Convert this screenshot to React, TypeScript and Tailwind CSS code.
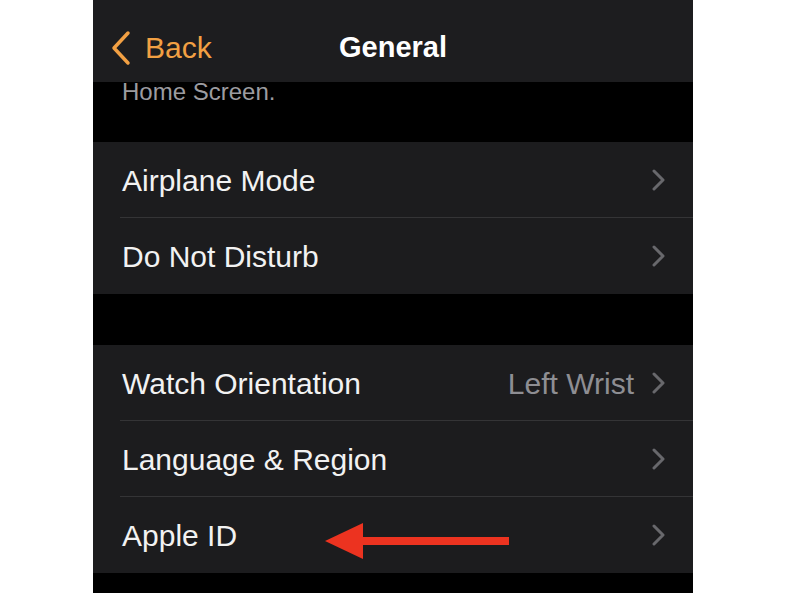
import React from 'react'

const font = { fontFamily: '"Liberation Sans", Arial, sans-serif' }

function Chevron() {
  return (
    <svg width="13" height="22" viewBox="0 0 13 22" fill="none">
      <path d="M2 2 L11 11 L2 20" stroke="#68686c" strokeWidth="3" strokeLinecap="round" strokeLinejoin="round" />
    </svg>
  )
}

function Row({ label, value, last, children }: { label: string; value?: string; last?: boolean; children?: React.ReactNode }) {
  return (
    <div className="relative h-[76px] bg-[#1c1c1e]">
      <div className="flex h-full items-center pl-[29px] pr-[28px]">
        <span className="flex-1 text-[30px] text-[#f2f2f2]">{label}</span>
        {value && <span className="mr-[18px] text-[30px] text-[#8e8e93]">{value}</span>}
        <Chevron />
      </div>
      {!last && <div className="absolute bottom-0 left-[27px] right-0 h-px bg-[#343436]" />}
      {children}
    </div>
  )
}

export default function App() {
  return (
    <div className="flex h-[593px] w-[800px] overflow-hidden bg-white" style={font}>
      <div className="w-[93px]" />
      <div className="flex w-[600px] flex-col bg-black">
        <div className="grid h-[82px] grid-cols-3 items-center bg-[#1d1d1f] pt-[13px]">
          <div className="flex items-center pl-[16px] text-[30px] text-[#f2a043]">
            <svg width="26" height="36" viewBox="0 0 26 36" fill="none" className="mr-[10px]">
              <path d="M19 3 L5 18 L19 33" stroke="#f2a043" strokeWidth="3.5" strokeLinecap="round" strokeLinejoin="round" />
            </svg>
            <span>Back</span>
          </div>
          <div className="text-center text-[29px] font-bold text-white">General</div>
          <div />
        </div>
        <div className="h-[60px]">
          <div className="pl-[29px] text-[24px] leading-[20px] text-[#9c9ca0]">Home Screen.</div>
        </div>
        <div>
          <Row label="Airplane Mode" />
          <Row label="Do Not Disturb" last />
        </div>
        <div className="h-[51px]" />
        <div>
          <Row label="Watch Orientation" value="Left Wrist" />
          <Row label="Language & Region" />
          <Row label="Apple ID" last>
            <svg width="184" height="36" viewBox="0 0 184 36" className="absolute left-[232px] top-[26px]">
              <polygon points="0,18 38,0 38,36" fill="#ec3320" />
              <rect x="36" y="14" width="148" height="8" fill="#ec3320" />
            </svg>
          </Row>
        </div>
      </div>
    </div>
  )
}
